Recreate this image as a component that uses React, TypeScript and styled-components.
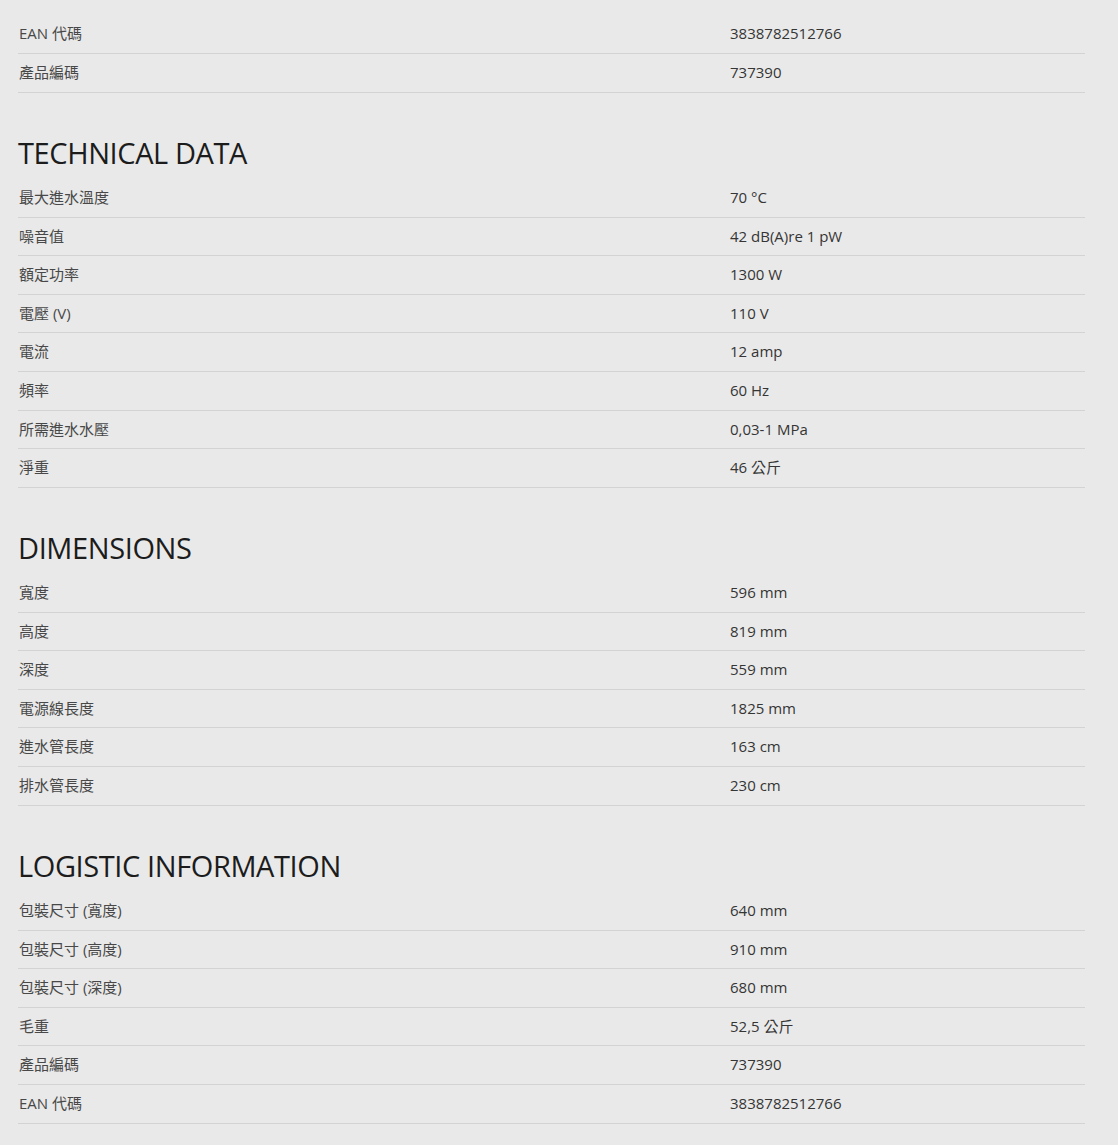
import styled, { createGlobalStyle } from 'styled-components';

const GlobalStyle = createGlobalStyle`
  html, body {
    margin: 0;
    padding: 0;
    background: #e9e9e9;
  }
  body {
    font-family: 'Open Sans', 'Noto Sans CJK TC', sans-serif;
  }
`;

const Page = styled.div`
  padding: 15.4px 33px 22px 18px;
  background: #e9e9e9;
`;

const Heading = styled.h2`
  margin: 42px 0 8.4px;
  font-size: 29px;
  line-height: 36px;
  font-weight: 400;
  color: #1c1c1c;
  letter-spacing: -0.4px;
`;

const Table = styled.div`
  display: flex;
  flex-direction: column;
`;

const Row = styled.div`
  display: grid;
  grid-template-columns: 712px 1fr;
  border-bottom: 1px solid #d3d3d3;
`;

const Cell = styled.div<{ $value?: boolean }>`
  padding: 7px 0 8.6px ${(p) => (p.$value ? '0' : '1px')};
  font-size: 15px;
  line-height: 22px;
  color: ${(p) => (p.$value ? '#353535' : '#484848')};
`;

type Spec = [string, string];

const general: Spec[] = [
  ['EAN 代碼', '3838782512766'],
  ['產品編碼', '737390'],
];

const sections: { title: string; rows: Spec[] }[] = [
  {
    title: 'TECHNICAL DATA',
    rows: [
      ['最大進水溫度', '70 °C'],
      ['噪音值', '42 dB(A)re 1 pW'],
      ['額定功率', '1300 W'],
      ['電壓 (V)', '110 V'],
      ['電流', '12 amp'],
      ['頻率', '60 Hz'],
      ['所需進水水壓', '0,03-1 MPa'],
      ['淨重', '46 公斤'],
    ],
  },
  {
    title: 'DIMENSIONS',
    rows: [
      ['寬度', '596 mm'],
      ['高度', '819 mm'],
      ['深度', '559 mm'],
      ['電源線長度', '1825 mm'],
      ['進水管長度', '163 cm'],
      ['排水管長度', '230 cm'],
    ],
  },
  {
    title: 'LOGISTIC INFORMATION',
    rows: [
      ['包裝尺寸 (寬度)', '640 mm'],
      ['包裝尺寸 (高度)', '910 mm'],
      ['包裝尺寸 (深度)', '680 mm'],
      ['毛重', '52,5 公斤'],
      ['產品編碼', '737390'],
      ['EAN 代碼', '3838782512766'],
    ],
  },
];

const SpecTable = ({ rows }: { rows: Spec[] }) => (
  <Table>
    {rows.map(([label, value], i) => (
      <Row key={i}>
        <Cell>{label}</Cell>
        <Cell $value>{value}</Cell>
      </Row>
    ))}
  </Table>
);

const App = () => {
  return (
    <>
      <GlobalStyle />
      <Page>
        <SpecTable rows={general} />
        {sections.map((s) => (
          <section key={s.title}>
            <Heading>{s.title}</Heading>
            <SpecTable rows={s.rows} />
          </section>
        ))}
      </Page>
    </>
  );
};

export default App;
